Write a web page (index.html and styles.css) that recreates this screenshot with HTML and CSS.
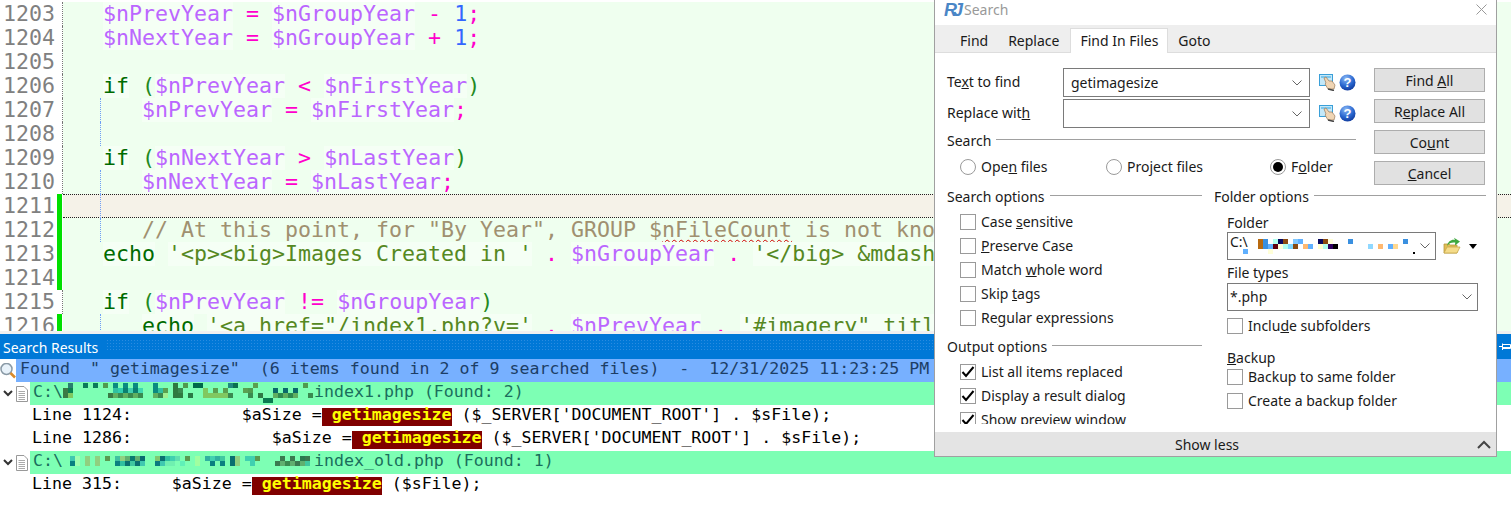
FILE: index.html
```html
<!DOCTYPE html>
<html lang="en">
<head>
<meta charset="utf-8">
<title>Search</title>
<link rel="stylesheet" href="styles.css">
</head>
<body>
<div class="app">
  <main class="editor">
    <div class="line"><span class="num">1203</span><span class="mark"></span><span class="code">   <i class="v">$nPrevYear</i> <b class="o">=</b> <i class="v">$nGroupYear</i> <b class="o">-</b> <b class="n">1</b><b class="o">;</b></span></div>
    <div class="line"><span class="num">1204</span><span class="mark"></span><span class="code">   <i class="v">$nNextYear</i> <b class="o">=</b> <i class="v">$nGroupYear</i> <b class="o">+</b> <b class="n">1</b><b class="o">;</b></span></div>
    <div class="line"><span class="num">1205</span><span class="mark"></span><span class="code"></span></div>
    <div class="line"><span class="num">1206</span><span class="mark"></span><span class="code">   <i class="k">if</i> <b class="p">(</b><i class="v">$nPrevYear</i> <b class="o">&lt;</b> <i class="v">$nFirstYear</i><b class="p">)</b></span></div>
    <div class="line guide"><span class="num">1207</span><span class="mark"></span><span class="code">      <i class="v">$nPrevYear</i> <b class="o">=</b> <i class="v">$nFirstYear</i><b class="o">;</b></span></div>
    <div class="line guide"><span class="num">1208</span><span class="mark"></span><span class="code"></span></div>
    <div class="line"><span class="num">1209</span><span class="mark"></span><span class="code">   <i class="k">if</i> <b class="p">(</b><i class="v">$nNextYear</i> <b class="o">&gt;</b> <i class="v">$nLastYear</i><b class="p">)</b></span></div>
    <div class="line guide"><span class="num">1210</span><span class="mark"></span><span class="code">      <i class="v">$nNextYear</i> <b class="o">=</b> <i class="v">$nLastYear</i><b class="o">;</b></span></div>
    <div class="line guide"><span class="num">1211</span><span class="mark on"></span><span class="code current"></span></div>
    <div class="line guide"><span class="num">1212</span><span class="mark on"></span><span class="code">      <i class="c">// At this point, for "By Year", GROUP $<span class="sq">nFileCount</span> is not known</i></span></div>
    <div class="line"><span class="num">1213</span><span class="mark on"></span><span class="code">   <i class="k">echo</i> <i class="s">'&lt;p&gt;&lt;big&gt;Images Created in '</i> <b class="o">.</b> <i class="v">$nGroupYear</i> <b class="o">.</b> <i class="s">'&lt;/big&gt; &amp;mdash; '</i></span></div>
    <div class="line"><span class="num">1214</span><span class="mark on"></span><span class="code"></span></div>
    <div class="line"><span class="num">1215</span><span class="mark"></span><span class="code">   <i class="k">if</i> <b class="p">(</b><i class="v">$nPrevYear</i> <b class="o">!=</b> <i class="v">$nGroupYear</i><b class="p">)</b></span></div>
    <div class="line guide"><span class="num">1216</span><span class="mark on"></span><span class="code">      <i class="k">echo</i> <i class="s">'&lt;a href="/index1.php?v='</i> <b class="o">.</b> <i class="v">$nPrevYear</i> <b class="o">.</b> <i class="s">'#imagery" title="'</i></span></div>
  </main>

  <section class="results">
    <header class="caption">
      <span class="caption-title">Search Results</span>
      <span class="caption-dots"></span>
      <svg class="pin" width="12" height="12" viewBox="0 0 12 12"><path d="M0 5.500H3M3.500 2.500V9M3.500 3.500H11.500V7.500H3.500M3.500 6.500H11" fill="none" stroke="#fff"/></svg>
    </header>
    <div class="rows">
      <div class="row found">
        <svg class="lens" width="16" height="16" viewBox="0 0 16 16"><circle cx="6.500" cy="6" r="5.500" fill="#e8f2fa" stroke="#8a9aa6" stroke-width="1.500"/><path d="M10.500 10l4.500 4.500" stroke="#d98a2b" stroke-width="2.500"/></svg>
        <span class="found-text">Found  " getimagesize"  (6 items found in 2 of 9 searched files)  -  12/31/2025 11:23:25 PM</span>
      </div>
      <div class="row file">
        <svg class="chev" width="10" height="7" viewBox="0 0 10 7"><path d="M1 1l4 4 4-4" fill="none" stroke="#333" stroke-width="2"/></svg>
        <svg class="doc" width="12" height="16" viewBox="0 0 12 16"><path d="M.5.500H8L11.500 4V15.500H.5Z" fill="#fff" stroke="#999"/><path d="M2.500 5.500H9M2.500 7.500H9M2.500 9.500H9M2.500 11.500H9M2.500 13.500H9" stroke="#aaa"/></svg>
        <span class="file-text">C:\<svg class="mosaic" width="251" height="23" viewBox="63 382 251 23">
          <rect x="68" y="383" fill="#2a8070"/><rect x="83" y="383" fill="#0a7a5a"/><rect x="93" y="383" fill="#0a7a5a"/><rect x="103" y="383" fill="#4f9a4f"/><rect x="113" y="383" fill="#0a8a80"/><rect x="123" y="383" fill="#0a8a80"/><rect x="133" y="383" fill="#0a8a80"/><rect x="153" y="383" fill="#0a8a80"/><rect x="173" y="383" fill="#2f7a40"/><rect x="183" y="383" fill="#4f9a4f"/><rect x="193" y="383" fill="#006a4a"/><rect x="198" y="383" fill="#006a4a"/><rect x="228" y="383" fill="#1f8a7f"/><rect x="233" y="383" fill="#0a7050"/><rect x="253" y="383" fill="#5a9f4f"/><rect x="303" y="383" fill="#4f9a4f"/>
          <rect x="63" y="388" fill="#3a7a45"/><rect x="68" y="388" fill="#0a8050"/><rect x="113" y="388" fill="#30c0a0"/><rect x="118" y="388" fill="#30d0b0"/><rect x="123" y="388" fill="#0a8070"/><rect x="128" y="388" fill="#40d0b0"/><rect x="133" y="388" fill="#0a8070"/><rect x="138" y="388" fill="#40d8b0"/><rect x="153" y="388" fill="#0a8a80"/><rect x="158" y="388" fill="#30c0a0"/><rect x="163" y="388" fill="#5aa050"/><rect x="173" y="388" fill="#2f7a40"/><rect x="178" y="388" fill="#3a8a50"/><rect x="203" y="388" fill="#80c860"/><rect x="213" y="388" fill="#5aa050"/><rect x="223" y="388" fill="#5aa050"/><rect x="243" y="388" fill="#5aa050"/><rect x="248" y="388" fill="#4f9a4f"/><rect x="273" y="388" fill="#0a6a6a"/><rect x="283" y="388" fill="#0a6a6a"/><rect x="293" y="388" fill="#0a6a6a"/>
          <rect x="63" y="393" fill="#3a7a45"/><rect x="68" y="393" fill="#80c860"/><rect x="108" y="393" fill="#3a7a45"/><rect x="113" y="393" fill="#60b060"/><rect x="118" y="393" fill="#3a8a50"/><rect x="123" y="393" fill="#60b060"/><rect x="128" y="393" fill="#3a8a50"/><rect x="133" y="393" fill="#60b060"/><rect x="138" y="393" fill="#3a8a50"/><rect x="153" y="393" fill="#60b060"/><rect x="158" y="393" fill="#3a8a50"/><rect x="163" y="393" fill="#a0f090"/><rect x="173" y="393" fill="#2f7a40"/><rect x="178" y="393" fill="#2f7a40"/><rect x="188" y="393" fill="#2a7a45"/><rect x="203" y="393" fill="#80c860"/><rect x="208" y="393" fill="#80c860"/><rect x="213" y="393" fill="#80c860"/><rect x="218" y="393" fill="#80c860"/><rect x="223" y="393" fill="#80c860"/><rect x="228" y="393" fill="#3a8a50"/><rect x="248" y="393" fill="#3a8a50"/><rect x="258" y="393" fill="#2f7a45"/><rect x="273" y="393" fill="#60b060"/><rect x="278" y="393" fill="#2f8a50"/><rect x="283" y="393" fill="#60b060"/><rect x="288" y="393" fill="#2f8a50"/><rect x="293" y="393" fill="#60b060"/><rect x="308" y="393" fill="#3a8a50"/>
          <rect x="263" y="398" fill="#0a7a50"/><rect x="268" y="398" fill="#0a7a50"/>
        </svg>index1.php (Found: 2)</span>
      </div>
      <div class="row hit">Line 1124:           $aSize =<mark> getimagesize</mark> ($_SERVER['DOCUMENT_ROOT'] . $sFile);</div>
      <div class="row hit">Line 1286:              $aSize =<mark> getimagesize</mark> ($_SERVER['DOCUMENT_ROOT'] . $sFile);</div>
      <div class="row file">
        <svg class="chev" width="10" height="7" viewBox="0 0 10 7"><path d="M1 1l4 4 4-4" fill="none" stroke="#333" stroke-width="2"/></svg>
        <svg class="doc" width="12" height="16" viewBox="0 0 12 16"><path d="M.5.500H8L11.500 4V15.500H.5Z" fill="#fff" stroke="#999"/><path d="M2.500 5.500H9M2.500 7.500H9M2.500 9.500H9M2.500 11.500H9M2.500 13.500H9" stroke="#aaa"/></svg>
        <span class="file-text">C:\<svg class="mosaic" width="251" height="23" viewBox="63 451 251 23">
          <rect x="70" y="456" fill="#40c8b0"/><rect x="75" y="456" fill="#a0ffb0"/><rect x="85" y="456" fill="#90d080"/><rect x="95" y="456" fill="#90d080"/><rect x="105" y="456" fill="#5a9a50"/><rect x="115" y="456" fill="#40c0a0"/><rect x="120" y="456" fill="#90d080"/><rect x="125" y="456" fill="#60b070"/><rect x="130" y="456" fill="#0a7a70"/><rect x="135" y="456" fill="#60b070"/><rect x="140" y="456" fill="#0a6a70"/><rect x="155" y="456" fill="#80c870"/><rect x="160" y="456" fill="#0a7070"/><rect x="165" y="456" fill="#30c0a0"/><rect x="170" y="456" fill="#40d0b0"/><rect x="175" y="456" fill="#60e0b0"/><rect x="185" y="456" fill="#5a9a50"/><rect x="195" y="456" fill="#a0ffa0"/><rect x="205" y="456" fill="#30b0a0"/><rect x="210" y="456" fill="#40d0b0"/><rect x="215" y="456" fill="#30b0a0"/><rect x="220" y="456" fill="#40c8a0"/><rect x="230" y="456" fill="#0a7070"/><rect x="235" y="456" fill="#90d080"/><rect x="245" y="456" fill="#40d0b0"/><rect x="250" y="456" fill="#40d0b0"/><rect x="255" y="456" fill="#5a9a50"/><rect x="280" y="456" fill="#3a7a50"/><rect x="290" y="456" fill="#3a7a50"/><rect x="300" y="456" fill="#2a7a50"/><rect x="305" y="456" fill="#3a7a50"/>
          <rect x="70" y="461" fill="#0a8080"/><rect x="75" y="461" fill="#a0ffb0"/><rect x="85" y="461" fill="#90d080"/><rect x="95" y="461" fill="#90d080"/><rect x="115" y="461" fill="#0a8080"/><rect x="120" y="461" fill="#30c0a0"/><rect x="125" y="461" fill="#0a7070"/><rect x="130" y="461" fill="#40c8a0"/><rect x="135" y="461" fill="#0a7070"/><rect x="140" y="461" fill="#40c8b0"/><rect x="155" y="461" fill="#0a7a80"/><rect x="160" y="461" fill="#40c8b0"/><rect x="165" y="461" fill="#70f0b0"/><rect x="170" y="461" fill="#70f0b0"/><rect x="180" y="461" fill="#60f0b8"/><rect x="195" y="461" fill="#a0ffa0"/><rect x="210" y="461" fill="#0a8080"/><rect x="220" y="461" fill="#0a8080"/><rect x="230" y="461" fill="#0a7070"/><rect x="235" y="461" fill="#90d080"/><rect x="250" y="461" fill="#40d0b0"/><rect x="275" y="461" fill="#3a7a50"/><rect x="280" y="461" fill="#60b070"/><rect x="285" y="461" fill="#3a8a50"/><rect x="290" y="461" fill="#60b070"/><rect x="295" y="461" fill="#3a7a50"/><rect x="300" y="461" fill="#60b070"/><rect x="305" y="461" fill="#40c8a0"/>
        </svg>index_old.php (Found: 1)</span>
      </div>
      <div class="row hit">Line 315:     $aSize =<mark> getimagesize</mark> ($sFile);</div>
    </div>
  </section>

  <aside class="dialog">
    <div class="titlebar">
      <span class="logo">RJ</span>
      <span class="title">Search</span>
      <svg class="close" width="11" height="11" viewBox="0 0 11 11"><path d="M.5.500l10 10M10.500.500l-10 10" stroke="#999" fill="none"/></svg>
    </div>
    <nav class="tabs">
      <span class="tab">Find</span>
      <span class="tab">Replace</span>
      <span class="tab active">Find In Files</span>
      <span class="tab">Goto</span>
    </nav>
    <div class="dlg-body">
      <div class="top">
        <div class="main">
          <div class="field">
            <span class="field-label">Te<u>x</u>t to find</span>
            <div class="combo wide"><span class="combo-text">getimagesize</span><svg class="caret" width="10" height="6" viewBox="0 0 10 6"><path d="M.5.500L5 5 9.500.500" fill="none" stroke="#666"/></svg></div>
            <svg class="pick" width="17" height="17" viewBox="0 0 17 17"><rect x=".5" y=".5" width="13" height="11" fill="#c4e8f8" stroke="#3a9fd8"/><path d="M2 2h10v2H2z" fill="#7cc6ec"/><path d="M5 4l2-1 3 4 3 0 3 4-1 4H9L6 10l1-1z" fill="#f0d5b4" stroke="#9a7a5a" stroke-width=".7"/><path d="M9 15l6 1.500" stroke="#444" stroke-width="1.500"/></svg>
            <svg class="help" width="17" height="17" viewBox="0 0 17 17"><defs><radialGradient id="hg" cx=".4" cy=".25" r=".85"><stop offset="0" stop-color="#8ab8f5"/><stop offset=".55" stop-color="#2a68d0"/><stop offset="1" stop-color="#0a2f90"/></radialGradient></defs><circle cx="8.500" cy="8.500" r="8" fill="url(#hg)"/><text x="8.500" y="13" class="help-mark">?</text></svg>
          </div>
          <div class="field">
            <span class="field-label">Replace wit<u>h</u></span>
            <div class="combo wide"><span class="combo-text"></span><svg class="caret" width="10" height="6" viewBox="0 0 10 6"><path d="M.5.500L5 5 9.500.500" fill="none" stroke="#666"/></svg></div>
            <svg class="pick" width="17" height="17" viewBox="0 0 17 17"><rect x=".5" y=".5" width="13" height="11" fill="#c4e8f8" stroke="#3a9fd8"/><path d="M2 2h10v2H2z" fill="#7cc6ec"/><path d="M5 4l2-1 3 4 3 0 3 4-1 4H9L6 10l1-1z" fill="#f0d5b4" stroke="#9a7a5a" stroke-width=".7"/><path d="M9 15l6 1.500" stroke="#444" stroke-width="1.500"/></svg>
            <svg class="help" width="17" height="17" viewBox="0 0 17 17"><circle cx="8.500" cy="8.500" r="8" fill="url(#hg)"/><text x="8.500" y="13" class="help-mark">?</text></svg>
          </div>
          <div class="group-head search-head"><span>Search</span><i class="rule"></i></div>
          <div class="radios">
            <label class="opt r1"><span class="rd"></span><span>Ope<u>n</u> files</span></label>
            <label class="opt r2"><span class="rd"></span><span>Pro<u>j</u>ect files</span></label>
            <label class="opt"><span class="rd on"></span><span>F<u>o</u>lder</span></label>
          </div>
        </div>
        <div class="buttons">
          <span class="btn"><span>Find <u>A</u>ll</span></span>
          <span class="btn"><span>R<u>e</u>place All</span></span>
          <span class="btn"><span>Co<u>u</u>nt</span></span>
          <span class="btn"><span><u>C</u>ancel</span></span>
        </div>
      </div>
      <div class="lower">
        <div class="col left">
          <div class="group-head"><span>Search options</span><i class="rule"></i></div>
          <div class="opts">
            <label class="opt"><span class="cb"></span><span>Case <u>s</u>ensitive</span></label>
            <label class="opt"><span class="cb"></span><span><u>P</u>reserve Case</span></label>
            <label class="opt"><span class="cb"></span><span>Match <u>w</u>hole word</span></label>
            <label class="opt"><span class="cb"></span><span>Skip <u>t</u>ags</span></label>
            <label class="opt"><span class="cb"></span><span>Re<u>g</u>ular expressions</span></label>
          </div>
          <div class="group-head output-head"><span>Output options</span><i class="rule"></i></div>
          <div class="opts">
            <label class="opt"><span class="cb"><svg width="14" height="14" viewBox="0 0 14 14"><path d="M1.500 7l3.500 4L12.500 2" fill="none" stroke="#000" stroke-width="2"/></svg></span><span>List all items replaced</span></label>
            <label class="opt"><span class="cb"><svg width="14" height="14" viewBox="0 0 14 14"><path d="M1.500 7l3.500 4L12.500 2" fill="none" stroke="#000" stroke-width="2"/></svg></span><span>Display a result dialog</span></label>
            <label class="opt"><span class="cb"><svg width="14" height="14" viewBox="0 0 14 14"><path d="M1.500 7l3.500 4L12.500 2" fill="none" stroke="#000" stroke-width="2"/></svg></span><span>Show preview window</span></label>
          </div>
        </div>
        <div class="col right">
          <div class="group-head"><span>Folder options</span><i class="rule"></i></div>
          <div class="folder">
            <div class="small-label folder-label">Folder</div>
            <div class="folder-row">
              <div class="combo folder-combo"><span class="combo-text">C:\<svg class="mosaic" width="170" height="26" viewBox="1250 233 170 26">
                <rect x="1245" y="249" fill="#60b0ff"/>
                <rect x="1260" y="239" fill="#b86a10"/><rect x="1265" y="239" fill="#3a90e0"/><rect x="1275" y="239" fill="#b0fff0"/><rect x="1280" y="239" fill="#0a0a60"/><rect x="1285" y="239" fill="#8a4a10"/><rect x="1295" y="239" fill="#80c8ff"/><rect x="1300" y="239" fill="#60b0ff"/><rect x="1320" y="239" fill="#0a0a60"/><rect x="1325" y="239" fill="#8a4a10"/><rect x="1330" y="239" fill="#ffffd8"/><rect x="1350" y="239" fill="#3a90e0"/><rect x="1405" y="239" fill="#3a90e0"/>
                <rect x="1260" y="244" fill="#b86a10"/><rect x="1265" y="244" fill="#3a90e0"/><rect x="1270" y="244" fill="#60b0ff"/><rect x="1275" y="244" fill="#600010"/><rect x="1280" y="244" fill="#ffffd8"/><rect x="1285" y="244" fill="#b0fff0"/><rect x="1290" y="244" fill="#80d8ff"/><rect x="1295" y="244" fill="#8a4a10"/><rect x="1305" y="244" fill="#ffb870"/><rect x="1310" y="244" fill="#60b0ff"/><rect x="1320" y="244" fill="#ffffd0"/><rect x="1325" y="244" fill="#b0fff0"/><rect x="1330" y="244" fill="#300060"/><rect x="1335" y="244" fill="#000"/><rect x="1370" y="244" fill="#90d8ff"/><rect x="1380" y="244" fill="#ffb870"/><rect x="1390" y="244" fill="#60b0ff"/><rect x="1395" y="244" fill="#ffd890"/>
                <rect x="1270" y="249" fill="#ffffd8"/>
                <path d="M1415 252h2v2h-2z" fill="#000"/>
              </svg></span><svg class="caret" width="10" height="6" viewBox="0 0 10 6"><path d="M.5.500L5 5 9.500.500" fill="none" stroke="#666"/></svg></div>
              <svg class="browse" width="18" height="18" viewBox="0 0 18 18"><path d="M1 7h5l1 1h7v8H1z" fill="#e2bc55" stroke="#b89a40" stroke-width=".8"/><path d="M1 16l3-6h13l-3 6z" fill="#f5dc8a" stroke="#c8a84a" stroke-width=".8"/><path d="M4 9C5 4 9 2 12 3L11 .8l6 3.700-5 4 .2-3C9 5 6 6 4 9z" fill="#3fa83f"/></svg>
              <svg class="drop" width="8" height="5" viewBox="0 0 8 5"><path d="M0 0h8L4 5z" fill="#000"/></svg>
            </div>
            <div class="small-label types-label">File types</div>
            <div class="combo types-combo"><span class="combo-text">*.php</span><svg class="caret" width="10" height="6" viewBox="0 0 10 6"><path d="M.5.500L5 5 9.500.500" fill="none" stroke="#666"/></svg></div>
            <label class="opt flush"><span class="cb"></span><span>Inclu<u>d</u>e subfolders</span></label>
            <div class="small-label backup-label"><u>B</u>ackup</div>
            <label class="opt flush"><span class="cb"></span><span>Backup to same folder</span></label>
            <label class="opt flush"><span class="cb"></span><span>Create a backup folder</span></label>
          </div>
        </div>
      </div>
    </div>
    <footer class="more">
      <span>Show less</span>
      <svg class="up" width="14" height="9" viewBox="0 0 14 9"><path d="M1 8l6-6 6 6" fill="none" stroke="#444" stroke-width="2"/></svg>
    </footer>
  </aside>
</div>
</body>
</html>
```

FILE: styles.css
```css
* { box-sizing: border-box; }
html, body { margin: 0; padding: 0; }
body { background: #fff; overflow: hidden; }
.app { position: relative; width: 1511px; height: 512px; overflow: hidden; display: flex; flex-direction: column; }

/* editor */
.editor { height: 334px; flex: none; padding: 2px 0 0; overflow: hidden; border-bottom: 3px solid #f0f0f0; background: #fff;
  font-family: "DejaVu Sans Mono", monospace; font-size: 21.6px; line-height: 24px; }
.line { position: relative; display: flex; height: 24px; }
.num { width: 57px; padding-left: 3px; color: #808080; flex: none; }
.mark { width: 6px; flex: none; border-right: 1px dotted #777; }
.mark.on { background: linear-gradient(90deg, #00e000 5px, #fff 5px); border-right: 0; }
.code { flex: 1; padding-left: 1px; background: #efffef; white-space: pre; overflow: hidden; }
.code i, .code b { font-style: normal; font-weight: 400; }
.current { background: #f5f2e8; border-top: 1px dotted #222; border-bottom: 1px dotted #222; }
.guide::after { content: ""; position: absolute; left: 100px; top: 0; bottom: 0; border-left: 1px dotted #6f9ff5; }
.v { color: #bb66ff; background: #f5fff5; }
.s { color: #558822; background: #f5fff5; }
.k { color: #006b00; background: #f5fff5; }
.c { color: #a09070; }
.o { color: #ff00cc; }
.n { color: #3366ff; }
.p { color: #1f8a1f; }
.sq { text-decoration: underline wavy #d00000; text-decoration-thickness: 1px; text-underline-offset: 2px; }

/* results */
.results { flex: 1; min-height: 0; display: flex; flex-direction: column; }
.caption { height: 25px; flex: none; background: #0078d7; color: #fff; display: flex; align-items: center; padding: 1px 0 0 3px;
  font-family: "Noto Sans", sans-serif; font-size: 14px; }
.caption-title { flex: none; }
.caption-dots { flex: 1; height: 13px; margin: 0 0 3px 8px;
  background-image: radial-gradient(circle, #2a8ce0 0.8px, transparent 1px); background-size: 3px 3px; }
.pin { flex: none; }
.rows { flex: 1; font-family: "DejaVu Sans Mono", monospace; font-size: 16.6px; line-height: 19px; }
.row { height: 23px; display: flex; align-items: center; position: relative; }
.found { padding-left: 16px; }
.found-text { flex: 1; background: #77b0ff; color: #1c3e66; padding-left: 4px; height: 23px; white-space: pre; }
.lens { position: absolute; left: 0; top: 4px; }
.file-text { flex: 1; background: #7dffb4; color: #1a6e5c; height: 23px; margin-left: 2px; padding-left: 3px; white-space: pre; }
.chev { margin-left: 3px; flex: none; }
.doc { margin-left: 3px; flex: none; }
.mosaic { vertical-align: top; overflow: visible; }
.mosaic rect { width: 5px; height: 5px; }
.hit { padding-left: 32px; color: #000; display: block; white-space: pre; }
mark { background: #800000; color: #ffff00; font-weight: 700; display: inline-block; height: 18px; line-height: 14px; }

/* dialog */
.dialog { position: absolute; left: 934px; top: 0; width: 563px; height: 457px; background: #fff; border: 1px solid #a0a0a0; border-top: 0;
  display: flex; flex-direction: column; font-family: "Noto Sans", sans-serif; font-size: 14px; color: #1a1a1a; line-height: 18px; }
.titlebar { height: 25px; flex: none; display: flex; align-items: center; padding: 0 0 6px 9px; }
.logo { font-family: "Liberation Sans", sans-serif; font-style: italic; font-weight: 700; font-size: 18px; letter-spacing: -4px; color: #4a86c6; width: 20px; }
.title { color: #999; flex: 1; }
.close { margin-right: 9px; }
.tabs { height: 28px; flex: none; background: #eee; border-bottom: 1px solid #ddd; display: flex; padding: 3px 0 0 15px; }
.tab { height: 25px; padding: 0 10px; display: flex; align-items: center; }
.tab.active { background: #fff; border: 1px solid #ddd; border-bottom: 0; height: 25px; padding: 0 9px; margin-left: 1px; }
.dlg-body { flex: 1; min-height: 0; padding: 15px 0 0 12px; }
.top { display: flex; height: 120px; }
.main { width: 409px; flex: none; }
.buttons { margin-left: 18px; width: 111px; flex: none; display: flex; flex-direction: column; gap: 7px; }
.btn { height: 24px; background: #e1e1e1; border: 1px solid #adadad; display: flex; align-items: center; justify-content: center; padding-top: 1px; white-space: pre; }
.field { display: flex; align-items: center; height: 29px; margin-bottom: 2px; }
.field-label { width: 116px; flex: none; padding-bottom: 2px; }
.combo { border: 1px solid #7a7a7a; background: #fff; display: flex; align-items: center; justify-content: space-between; flex: none; padding: 0 7px 0 7px; height: 29px; }
.combo.wide { width: 247px; }
.combo-text { white-space: pre; }
.pick { margin-left: 9px; flex: none; }
.help { margin-left: 3px; flex: none; }
.help-mark { fill: #fff; font-family: "Liberation Sans", sans-serif; font-weight: 700; font-size: 13px; text-anchor: middle; }
.group-head { display: flex; align-items: center; height: 18px; }
.group-head span { flex: none; }
.rule { flex: 1; height: 1px; background: #a0a0a0; margin: 0 0 3px 5px; }
.search-head { margin-top: 4px; }
.radios { display: flex; padding: 8px 0 0 13px; }
.opt { display: flex; align-items: center; height: 24px; gap: 5px; padding-left: 13px; white-space: pre; }
.radios .opt { padding: 0; height: 18px; }
.r1 { width: 146px; }
.r2 { width: 164px; }
.rd { width: 16px; height: 16px; border: 1px solid #9a9a9a; border-radius: 50%; display: flex; align-items: center; justify-content: center; flex: none; }
.rd.on::after { content: ""; width: 10px; height: 10px; border-radius: 50%; background: #000; }
.cb { width: 16px; height: 16px; border: 1px solid #9a9a9a; display: flex; align-items: center; justify-content: center; flex: none; background: #fff; }
.lower { display: flex; gap: 12px; height: 236px; overflow: hidden; }
.col.left { width: 255px; flex: none; }
.col.right { width: 272px; flex: none; }
.opts { padding-top: 4px; }
.output-head { margin-top: 8px; }
.folder { padding-left: 13px; }
.small-label { height: 18px; }
.folder-label { margin-top: 8px; }
.folder-row { display: flex; align-items: center; }
.folder-combo { width: 209px; height: 28px; padding: 0 5px 0 2px; }
.browse { margin-left: 7px; flex: none; }
.drop { margin-left: 8px; flex: none; }
.types-label { margin-top: 4px; }
.types-combo { width: 251px; height: 28px; margin-top: 1px; padding: 0 5px 0 2px; }
.opt.flush { padding-left: 0; }
.types-combo + .opt { margin-top: 3px; }
.backup-label { margin-top: 11px; margin-bottom: -2px; }
.more { height: 24px; flex: none; background: #e4e4e4; display: flex; align-items: center; justify-content: center; position: relative; padding: 1px 17px 0 0; }
.up { position: absolute; right: 5px; top: 8px; }
```
